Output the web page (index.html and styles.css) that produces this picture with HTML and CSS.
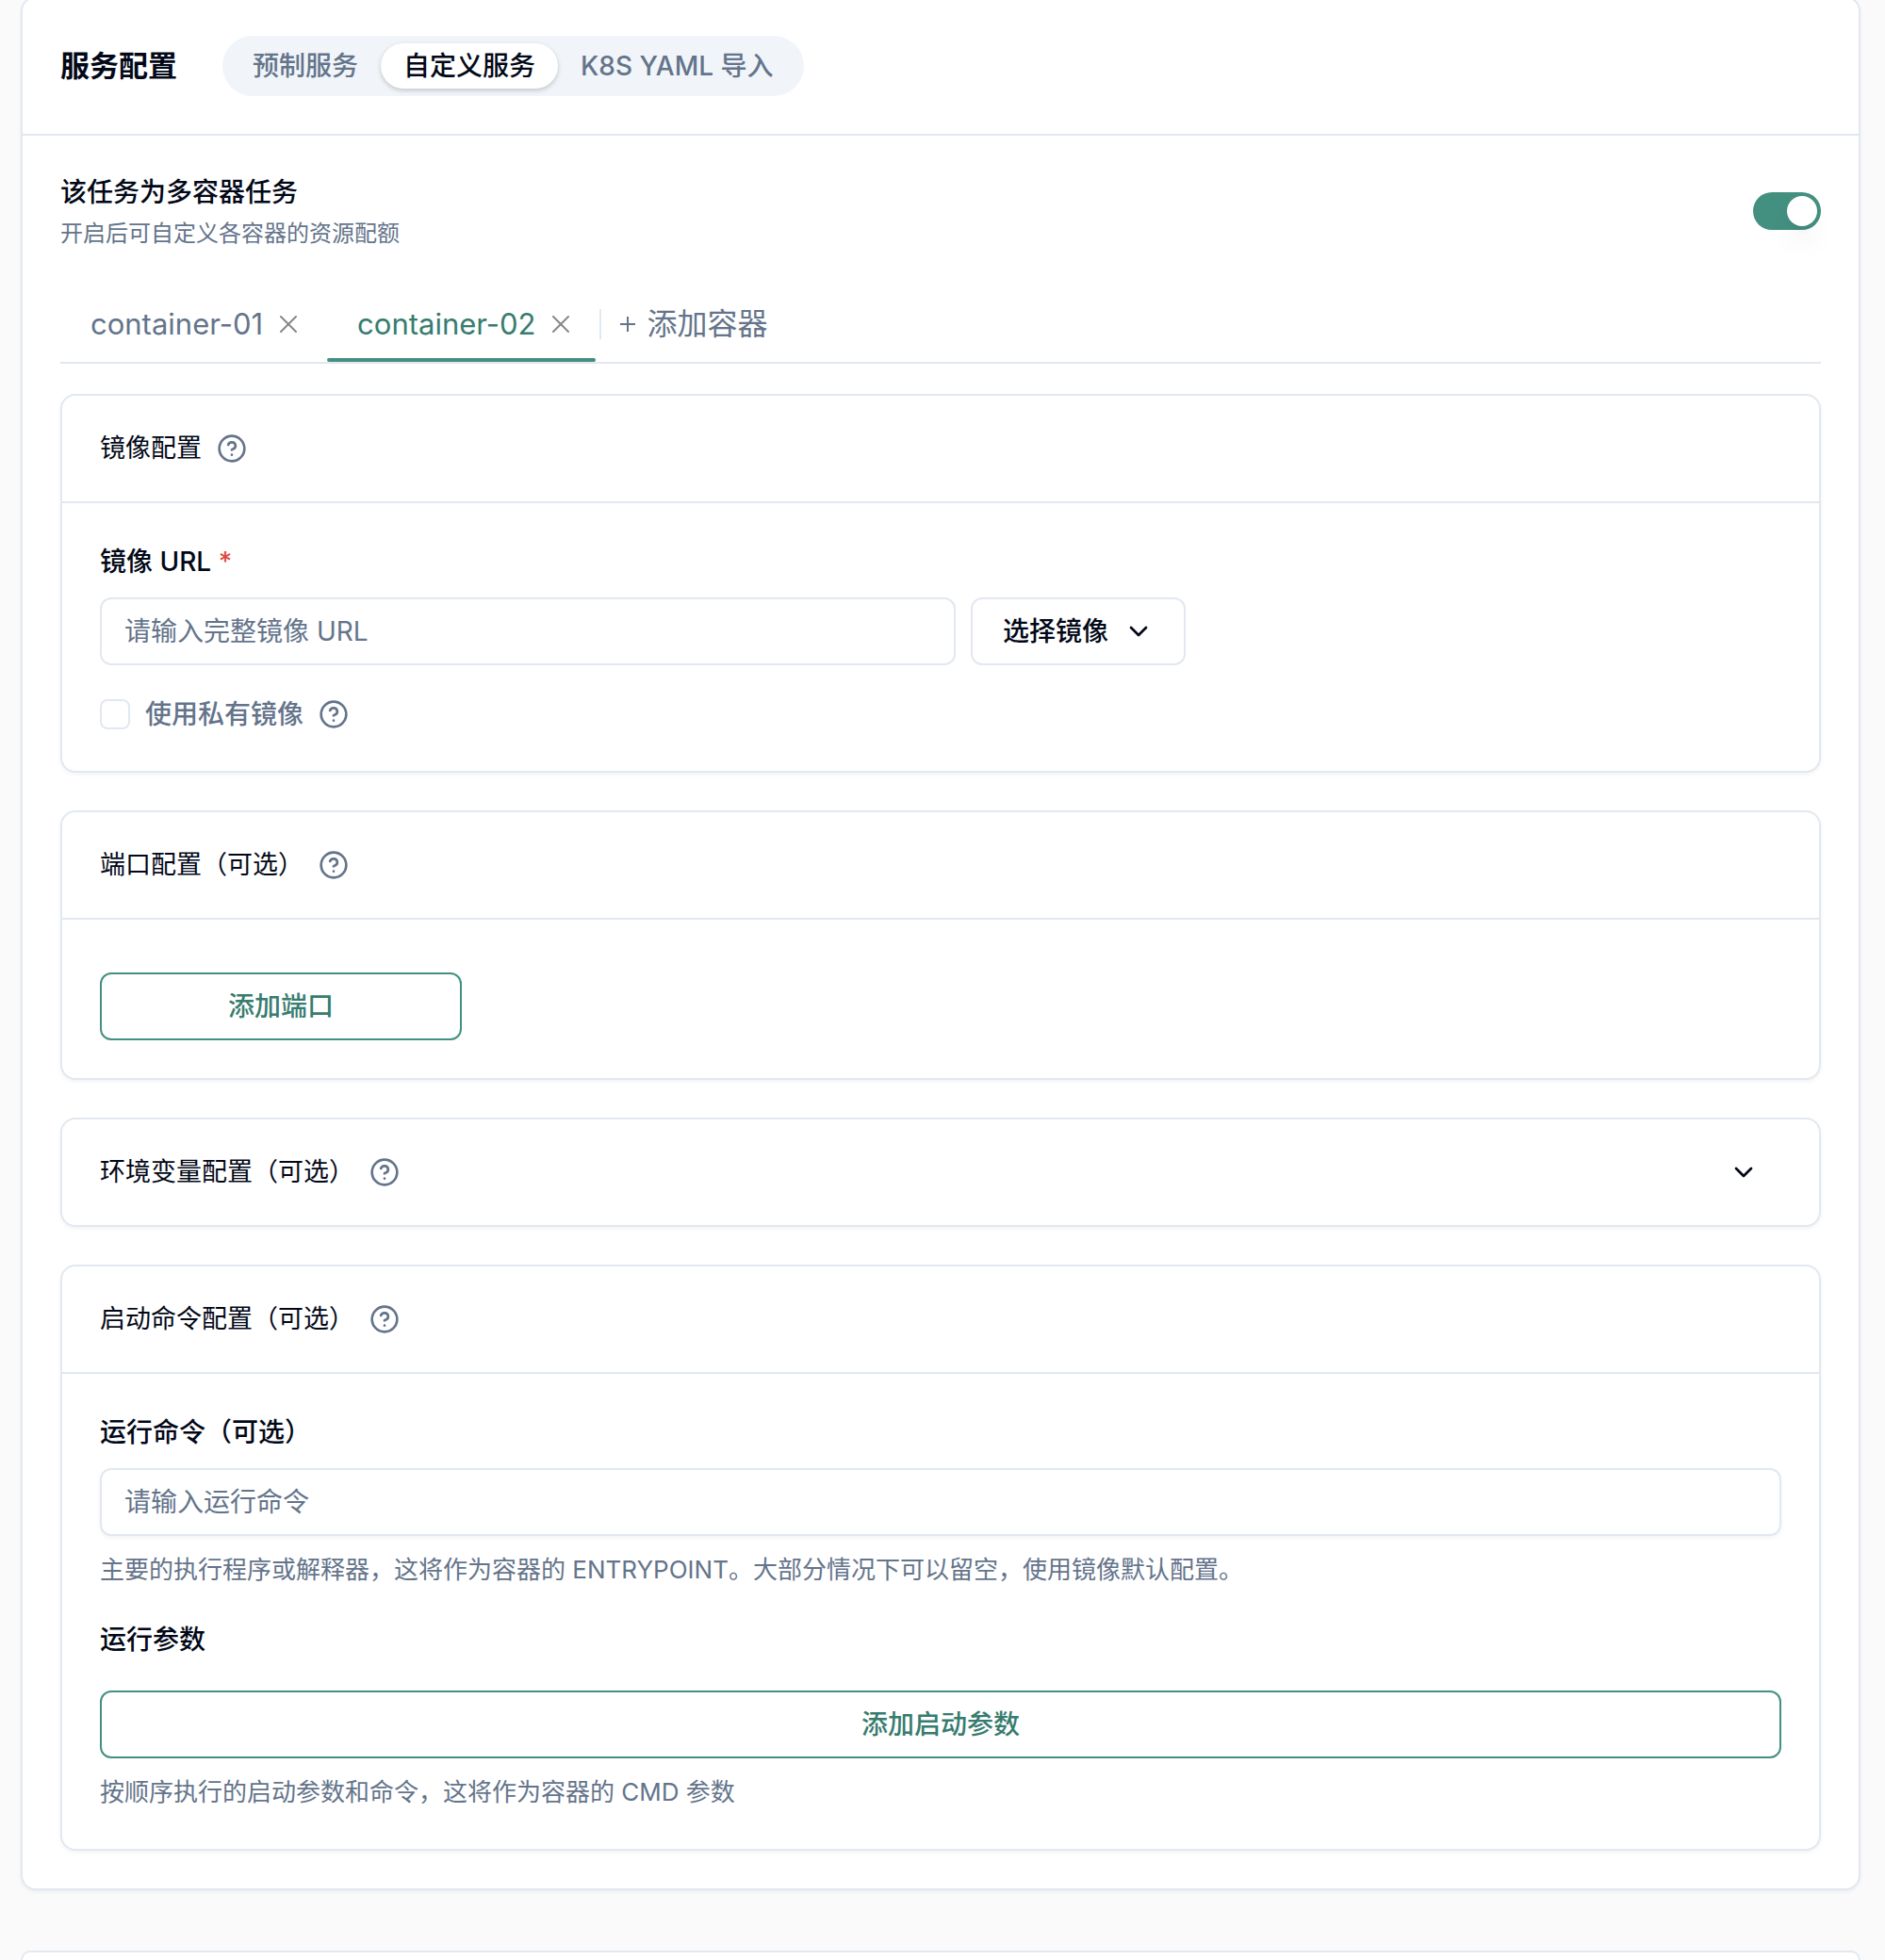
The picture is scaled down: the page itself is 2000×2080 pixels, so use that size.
FILE: index.html
```html
<!DOCTYPE html>
<html lang="zh-CN">
<head>
    <meta charset="UTF-8">
    <meta name="viewport" content="width=device-width, initial-scale=1.0">
    <title>服务配置</title>
    <link rel="stylesheet" href="styles.css">
</head>
<body>

    <!-- shared icons -->
    <svg class="sprite" aria-hidden="true">
        <symbol id="icon-help" viewBox="0 0 24 24">
            <circle cx="12" cy="12" r="10"/>
            <path d="M9.09 9a3 3 0 0 1 5.83 1c0 2-3 3-3 3"/>
            <path d="M12 17h.01"/>
        </symbol>
        <symbol id="icon-down" viewBox="0 0 24 24">
            <path d="m6 9 6 6 6-6"/>
        </symbol>
        <symbol id="icon-close" viewBox="0 0 18 18">
            <path d="M1 1l16 16M17 1L1 17"/>
        </symbol>
        <symbol id="icon-plus" viewBox="0 0 16 16">
            <path d="M8 0v16M0 8h16"/>
        </symbol>
    </svg>

    <main class="page">
        <section class="panel">
            <header class="panel-header">
                <h1>服务配置</h1>
                <div class="segmented" role="tablist">
                    <button type="button" role="tab">预制服务</button>
                    <button type="button" role="tab" class="active" aria-selected="true">自定义服务</button>
                    <button type="button" role="tab">K8S YAML 导入</button>
                </div>
            </header>

            <div class="panel-body">
                <div class="multi">
                    <div>
                        <label class="multi-title" for="multi">该任务为多容器任务</label>
                        <p class="multi-desc">开启后可自定义各容器的资源配额</p>
                    </div>
                    <input type="checkbox" role="switch" id="multi" class="switch" checked>
                </div>

                <nav class="tabs">
                    <div class="tab">
                        <button type="button" class="tab-name">container-01</button>
                        <button type="button" class="tab-close" aria-label="关闭"><svg class="icon-close"><use href="#icon-close"/></svg></button>
                    </div>
                    <div class="tab active">
                        <button type="button" class="tab-name">container-02</button>
                        <button type="button" class="tab-close" aria-label="关闭"><svg class="icon-close"><use href="#icon-close"/></svg></button>
                    </div>
                    <button type="button" class="tab-add"><svg class="icon-plus"><use href="#icon-plus"/></svg>添加容器</button>
                </nav>

                <div class="cards">
                    <section class="card">
                        <header class="card-header">
                            <h2>镜像配置</h2>
                            <svg class="icon help"><use href="#icon-help"/></svg>
                        </header>
                        <div class="card-body">
                            <label class="field-label" for="image">镜像 URL <span class="required">*</span></label>
                            <div class="image-row">
                                <input type="text" id="image" class="input" placeholder="请输入完整镜像 URL">
                                <button type="button" class="btn">选择镜像 <svg class="icon"><use href="#icon-down"/></svg></button>
                            </div>
                            <div class="check-row">
                                <input type="checkbox" id="private" class="checkbox">
                                <label for="private">使用私有镜像</label>
                                <svg class="icon help"><use href="#icon-help"/></svg>
                            </div>
                        </div>
                    </section>

                    <section class="card">
                        <header class="card-header">
                            <h2>端口配置（可选）</h2>
                            <svg class="icon help"><use href="#icon-help"/></svg>
                        </header>
                        <div class="card-body ports">
                            <button type="button" class="btn btn-green btn-port">添加端口</button>
                        </div>
                    </section>

                    <section class="card">
                        <header class="card-header">
                            <h2>环境变量配置（可选）</h2>
                            <svg class="icon help"><use href="#icon-help"/></svg>
                            <button type="button" class="expand" aria-label="展开"><svg class="icon"><use href="#icon-down"/></svg></button>
                        </header>
                    </section>

                    <section class="card">
                        <header class="card-header">
                            <h2>启动命令配置（可选）</h2>
                            <svg class="icon help"><use href="#icon-help"/></svg>
                        </header>
                        <div class="card-body">
                            <label class="field-label" for="command">运行命令（可选）</label>
                            <input type="text" id="command" class="input" placeholder="请输入运行命令">
                            <p class="hint">主要的执行程序或解释器，这将作为容器的 ENTRYPOINT。大部分情况下可以留空，使用镜像默认配置。</p>
                            <h3 class="field-label args-label">运行参数</h3>
                            <button type="button" class="btn btn-green btn-args">添加启动参数</button>
                            <p class="hint">按顺序执行的启动参数和命令，这将作为容器的 CMD 参数</p>
                        </div>
                    </section>
                </div>
            </div>
        </section>

        <section class="panel next"></section>
    </main>

</body>
</html>
```
FILE: styles.css
```css
* {
    box-sizing: border-box;
}
body {
    display: flow-root;
    margin: 0;
    background-color: #fafafa;
    color: #020817;
    font-family: Inter, "Noto Sans CJK SC", sans-serif;
    font-size: 28px;
    line-height: 40px;
}
h1, h2, h3, p {
    margin: 0;
}
button, input {
    font: inherit;
    color: inherit;
}
button {
    padding: 0;
    border: none;
    background: none;
    cursor: pointer;
}
.sprite {
    display: none;
}
.icon {
    width: 32px;
    height: 32px;
    flex: none;
    fill: none;
    stroke: currentColor;
    stroke-width: 2px;
    stroke-linecap: round;
    stroke-linejoin: round;
}
.help {
    color: #64748b;
}

/* outer panel */
.page {
    display: flex;
    flex-direction: column;
    gap: 64px;
    min-height: calc(100vh + 4px);
    margin: -4px 26px 0 22px;
}
.panel, .card {
    border: 2px solid #e2e8f0;
    border-radius: 16px;
    background-color: #fff;
    box-shadow: 0 2px 4px rgba(0, 0, 0, 0.05);
}
.panel-header {
    display: flex;
    align-items: center;
    gap: 48px;
    padding: 40px;
    border-bottom: 2px solid #e2e8f0;
}
.panel-header h1 {
    font-size: 31px;
    font-weight: 600;
}
.panel-body {
    padding: 40px;
}
.next {
    flex: 1;
    border-bottom: none;
    border-radius: 16px 16px 0 0;
    box-shadow: none;
}

.segmented {
    display: flex;
    padding: 8px;
    border-radius: 32px;
    background-color: #f1f5f9;
    color: #64748b;
}
.segmented button {
    height: 48px;
    padding: 0 24px;
    border-radius: 24px;
    font-weight: 500;
}
.segmented .active {
    background-color: #fff;
    color: #020817;
    box-shadow: 0 2px 6px rgba(0, 0, 0, 0.1), 0 2px 4px rgba(0, 0, 0, 0.1);
}

.multi {
    display: flex;
    align-items: center;
    justify-content: space-between;
}
.multi-title {
    display: block;
    font-weight: 500;
}
.multi-desc {
    margin-top: 8px;
    font-size: 24px;
    line-height: 32px;
    color: #64748b;
}
.switch {
    appearance: none;
    width: 72px;
    height: 40px;
    margin: 0;
    padding: 4px;
    border-radius: 20px;
    background-color: #cbd5e1;
}
.switch::before {
    content: "";
    display: block;
    width: 32px;
    height: 32px;
    border-radius: 50%;
    background-color: #fff;
    box-shadow: 0 20px 30px -6px rgba(0, 0, 0, 0.1), 0 8px 12px -8px rgba(0, 0, 0, 0.1);
}
.switch:checked {
    background-color: #439080;
}
.switch:checked::before {
    margin-left: auto;
}

/* container tabs */
.tabs {
    display: flex;
    align-items: center;
    gap: 4px;
    margin: 40px 0 32px;
    border-bottom: 2px solid #e2e8f0;
    font-size: 32px;
    color: #64748b;
}
.tab {
    position: relative;
    display: flex;
    align-items: center;
    gap: 18px;
    height: 80px;
    padding: 0 28px 0 32px;
}
.tab-name {
    font-size: 31px;
}
.tab.active {
    color: #377c6f;
}
.tab.active::after {
    content: "";
    position: absolute;
    left: 0;
    right: 0;
    bottom: 0;
    height: 4px;
    border-radius: 2px;
    background-color: #439080;
}
.tab-close {
    display: flex;
    color: #888;
}
.icon-close {
    width: 18px;
    height: 18px;
    fill: none;
    stroke: currentColor;
    stroke-width: 2px;
    stroke-linecap: round;
}
.tab-add {
    display: flex;
    align-items: center;
    gap: 12px;
    height: 32px;
    padding-left: 20px;
    border-left: 2px solid #e2e8f0;
}
.icon-plus {
    width: 16px;
    height: 16px;
    fill: none;
    stroke: currentColor;
    stroke-width: 2px;
}

/* config cards */
.cards {
    display: flex;
    flex-direction: column;
    gap: 40px;
}
.card-header {
    display: flex;
    align-items: center;
    gap: 16px;
    height: 112px;
    padding: 0 40px;
}
.card-header h2 {
    font-size: 27px;
    font-weight: 400;
}
.expand {
    display: flex;
    margin-left: auto;
    padding: 0 24px;
}
.card-body {
    padding: 40px;
    border-top: 2px solid #e2e8f0;
}
.field-label {
    display: block;
    margin-bottom: 16px;
    font-size: 28px;
    font-weight: 500;
    line-height: 44px;
}
.required {
    color: #dc4b42;
}
.input {
    display: block;
    width: 100%;
    height: 72px;
    padding: 0 24px;
    border: 2px solid #e2e8f0;
    border-radius: 12px;
    background-color: #fff;
    box-shadow: 0 2px 4px rgba(0, 0, 0, 0.05);
}
.input::placeholder {
    color: #64748b;
    opacity: 1;
}
.image-row {
    display: flex;
    gap: 16px;
}
.image-row .input {
    width: 908px;
    box-shadow: none;
}
.btn {
    display: flex;
    align-items: center;
    justify-content: center;
    gap: 16px;
    height: 72px;
    padding: 0 32px;
    border: 2px solid #e2e8f0;
    border-radius: 12px;
    background-color: #fff;
    font-weight: 500;
    white-space: nowrap;
}
.btn-green {
    border-color: #439080;
    color: #377c6f;
}
.check-row {
    display: flex;
    align-items: center;
    gap: 16px;
    margin-top: 32px;
    font-weight: 500;
    color: #64748b;
}
.checkbox {
    appearance: none;
    width: 32px;
    height: 32px;
    margin: 0;
    border: 2px solid #e2e8f0;
    border-radius: 8px;
}
.ports {
    padding-top: 56px;
}
.btn-port {
    width: 384px;
}
.args-label {
    margin: 32px 0;
}
.btn-args {
    width: 100%;
}
.hint {
    margin-top: 16px;
    font-size: 26px;
    color: #64748b;
}
```
